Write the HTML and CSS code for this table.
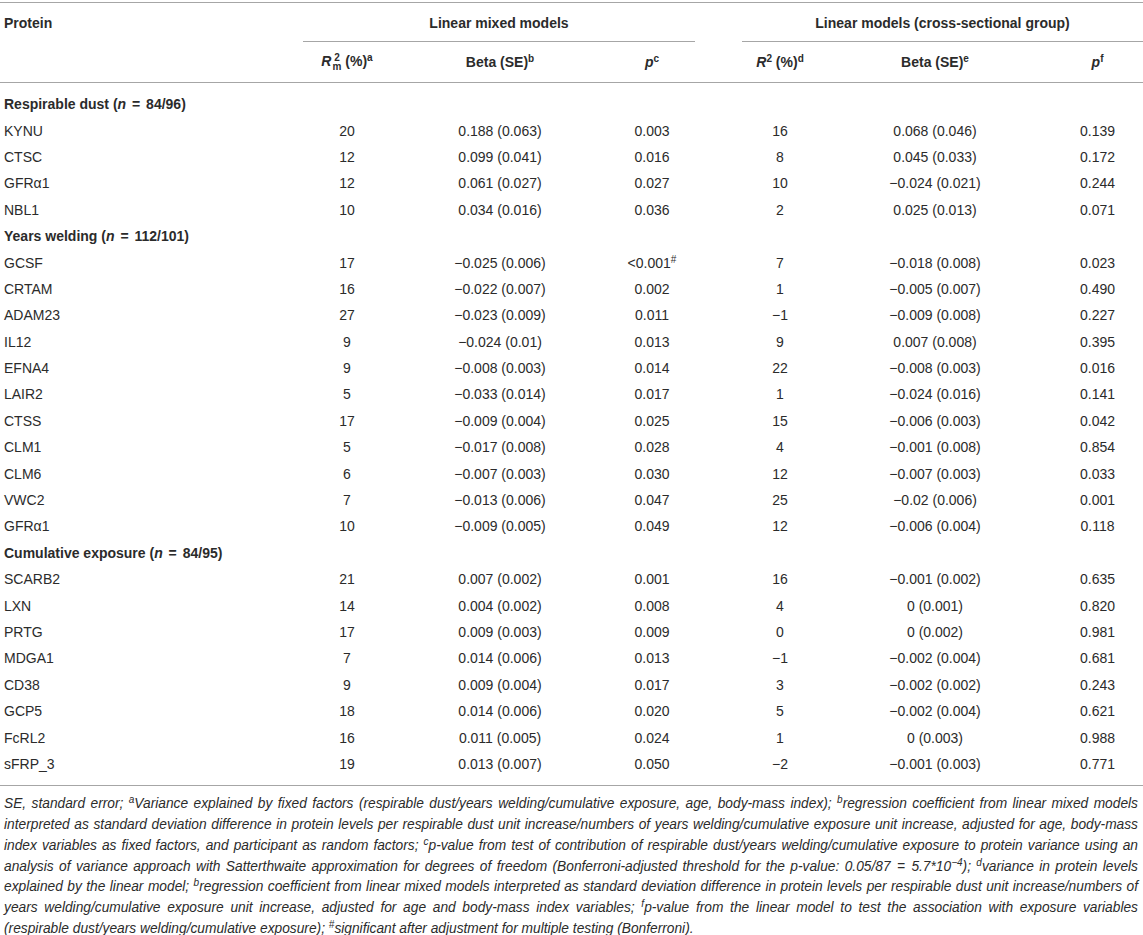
FILE: index.html
```html
<!DOCTYPE html>
<html>
<head>
<meta charset="utf-8">
<link rel="stylesheet" href="styles.css">
</head>
<body>
<div class="page">
<table class="tbl">
<colgroup>
<col class="w1"><col class="w2"><col class="w3"><col class="w4"><col class="w5"><col class="w6"><col class="w7"><col class="w8">
</colgroup>
<thead>
<tr class="h1">
<th class="left">Protein</th>
<th colspan="3" class="grp">Linear mixed models</th>
<th></th>
<th colspan="3" class="grp">Linear models (cross-sectional group)</th>
</tr>
<tr class="h2">
<th></th>
<th><span class="rsym"><i>R</i><span class="stack"><span class="s2">2</span><span class="sm">m</span></span></span> (%)<sup>a</sup></th>
<th>Beta (SE)<sup>b</sup></th>
<th><i>p</i><sup>c</sup></th>
<th></th>
<th><i>R</i><sup>2</sup> (%)<sup>d</sup></th>
<th>Beta (SE)<sup>e</sup></th>
<th><i>p</i><sup>f</sup></th>
</tr>
</thead>
<tbody>
<tr class="sec first"><td colspan="8">Respirable dust (<i>n</i> <span class="eq">=</span> 84/96)</td></tr>
<tr><td>KYNU</td><td>20</td><td>0.188 (0.063)</td><td>0.003</td><td></td><td>16</td><td>0.068 (0.046)</td><td>0.139</td></tr>
<tr><td>CTSC</td><td>12</td><td>0.099 (0.041)</td><td>0.016</td><td></td><td>8</td><td>0.045 (0.033)</td><td>0.172</td></tr>
<tr><td>GFRα1</td><td>12</td><td>0.061 (0.027)</td><td>0.027</td><td></td><td>10</td><td>−0.024 (0.021)</td><td>0.244</td></tr>
<tr><td>NBL1</td><td>10</td><td>0.034 (0.016)</td><td>0.036</td><td></td><td>2</td><td>0.025 (0.013)</td><td>0.071</td></tr>
<tr class="sec"><td colspan="8">Years welding (<i>n</i> <span class="eq">=</span> 112/101)</td></tr>
<tr><td>GCSF</td><td>17</td><td>−0.025 (0.006)</td><td>&lt;0.001<sup>#</sup></td><td></td><td>7</td><td>−0.018 (0.008)</td><td>0.023</td></tr>
<tr><td>CRTAM</td><td>16</td><td>−0.022 (0.007)</td><td>0.002</td><td></td><td>1</td><td>−0.005 (0.007)</td><td>0.490</td></tr>
<tr><td>ADAM23</td><td>27</td><td>−0.023 (0.009)</td><td>0.011</td><td></td><td>−1</td><td>−0.009 (0.008)</td><td>0.227</td></tr>
<tr><td>IL12</td><td>9</td><td>−0.024 (0.01)</td><td>0.013</td><td></td><td>9</td><td>0.007 (0.008)</td><td>0.395</td></tr>
<tr><td>EFNA4</td><td>9</td><td>−0.008 (0.003)</td><td>0.014</td><td></td><td>22</td><td>−0.008 (0.003)</td><td>0.016</td></tr>
<tr><td>LAIR2</td><td>5</td><td>−0.033 (0.014)</td><td>0.017</td><td></td><td>1</td><td>−0.024 (0.016)</td><td>0.141</td></tr>
<tr><td>CTSS</td><td>17</td><td>−0.009 (0.004)</td><td>0.025</td><td></td><td>15</td><td>−0.006 (0.003)</td><td>0.042</td></tr>
<tr><td>CLM1</td><td>5</td><td>−0.017 (0.008)</td><td>0.028</td><td></td><td>4</td><td>−0.001 (0.008)</td><td>0.854</td></tr>
<tr><td>CLM6</td><td>6</td><td>−0.007 (0.003)</td><td>0.030</td><td></td><td>12</td><td>−0.007 (0.003)</td><td>0.033</td></tr>
<tr><td>VWC2</td><td>7</td><td>−0.013 (0.006)</td><td>0.047</td><td></td><td>25</td><td>−0.02 (0.006)</td><td>0.001</td></tr>
<tr><td>GFRα1</td><td>10</td><td>−0.009 (0.005)</td><td>0.049</td><td></td><td>12</td><td>−0.006 (0.004)</td><td>0.118</td></tr>
<tr class="sec"><td colspan="8">Cumulative exposure (<i>n</i> <span class="eq">=</span> 84/95)</td></tr>
<tr><td>SCARB2</td><td>21</td><td>0.007 (0.002)</td><td>0.001</td><td></td><td>16</td><td>−0.001 (0.002)</td><td>0.635</td></tr>
<tr><td>LXN</td><td>14</td><td>0.004 (0.002)</td><td>0.008</td><td></td><td>4</td><td>0 (0.001)</td><td>0.820</td></tr>
<tr><td>PRTG</td><td>17</td><td>0.009 (0.003)</td><td>0.009</td><td></td><td>0</td><td>0 (0.002)</td><td>0.981</td></tr>
<tr><td>MDGA1</td><td>7</td><td>0.014 (0.006)</td><td>0.013</td><td></td><td>−1</td><td>−0.002 (0.004)</td><td>0.681</td></tr>
<tr><td>CD38</td><td>9</td><td>0.009 (0.004)</td><td>0.017</td><td></td><td>3</td><td>−0.002 (0.002)</td><td>0.243</td></tr>
<tr><td>GCP5</td><td>18</td><td>0.014 (0.006)</td><td>0.020</td><td></td><td>5</td><td>−0.002 (0.004)</td><td>0.621</td></tr>
<tr><td>FcRL2</td><td>16</td><td>0.011 (0.005)</td><td>0.024</td><td></td><td>1</td><td>0 (0.003)</td><td>0.988</td></tr>
<tr class="last"><td>sFRP_3</td><td>19</td><td>0.013 (0.007)</td><td>0.050</td><td></td><td>−2</td><td>−0.001 (0.003)</td><td>0.771</td></tr>
</tbody>
</table>
<p class="notes"><i>SE</i>, standard error; <sup>a</sup>Variance explained by fixed factors (respirable dust/years welding/cumulative exposure, age, body-mass index); <sup>b</sup>regression coefficient from linear mixed models interpreted as standard deviation difference in protein levels per respirable dust unit increase/numbers of years welding/cumulative exposure unit increase, adjusted for age, body-mass index variables as fixed factors, and participant as random factors; <sup>c</sup>p-value from test of contribution of respirable dust/years welding/cumulative exposure to protein variance using an analysis of variance approach with Satterthwaite approximation for degrees of freedom (Bonferroni-adjusted threshold for the p-value: 0.05/87 <span class="eq">=</span> 5.7*10<sup>−4</sup>); <sup>d</sup>variance in protein levels explained by the linear model; <sup>b</sup>regression coefficient from linear mixed models interpreted as standard deviation difference in protein levels per respirable dust unit increase/numbers of years welding/cumulative exposure unit increase, adjusted for age and body-mass index variables; <sup>f</sup>p-value from the linear model to test the association with exposure variables (respirable dust/years welding/cumulative exposure); <sup>#</sup>significant after adjustment for multiple testing (Bonferroni).</p>
</div>
</body>
</html>
```
FILE: styles.css
```css
html, body {
  margin: 0;
  padding: 0;
  background: #ffffff;
}
.page {
  width: 1143px;
  padding-top: 2px;
  font-family: "Liberation Sans", Arial, sans-serif;
  font-size: 14px;
  color: #2b2b2b;
}
.tbl {
  width: 1143px;
  border-collapse: collapse;
  table-layout: fixed;
  border-top: 1px solid #a6a6a6;
  border-bottom: 1px solid #a6a6a6;
}
.w1 { width: 303px; }
.w2 { width: 88px; }
.w3 { width: 218px; }
.w4 { width: 86px; }
.w5 { width: 47px; }
.w6 { width: 76px; }
.w7 { width: 234px; }
.w8 { width: 91px; }
.tbl th, .tbl td {
  padding: 0;
  text-align: center;
  white-space: nowrap;
}
.tbl th {
  font-weight: bold;
}
.tbl th.left, .tbl td:first-child {
  text-align: left;
  padding-left: 4px;
}
.h1 th {
  height: 37px;
  vertical-align: middle;
  padding-top: 1px;
}
.h1 th.grp {
  border-bottom: 1px solid #a6a6a6;
}
.h2 th {
  height: 40px;
  vertical-align: middle;
  border-bottom: 1px solid #a6a6a6;
}
.tbl td {
  height: 26.4px;
  vertical-align: middle;
}
.sec td {
  font-weight: bold;
}
.first td {
  padding-top: 8px;
}
.last td {
  padding-bottom: 8px;
}
.eq {
  padding: 0 2px;
}
sup {
  font-size: 10px;
  line-height: 0;
  vertical-align: 5px;
}
.rsym {
  display: inline-block;
  white-space: nowrap;
}
.stack {
  display: inline-flex;
  flex-direction: column;
  vertical-align: 5px;
  line-height: 9px;
  font-size: 10px;
  margin-left: 1px;
}
.notes {
  margin: 8px 0 0 0;
  padding: 0 5px 0 4px;
  font-style: italic;
  font-size: 13.75px;
  line-height: 20.8px;
  text-align: justify;
  color: #2b2b2b;
}
.notes .eq {
  padding: 0 1px;
}
.notes sup {
  font-size: 10px;
  vertical-align: 5px;
}
```
